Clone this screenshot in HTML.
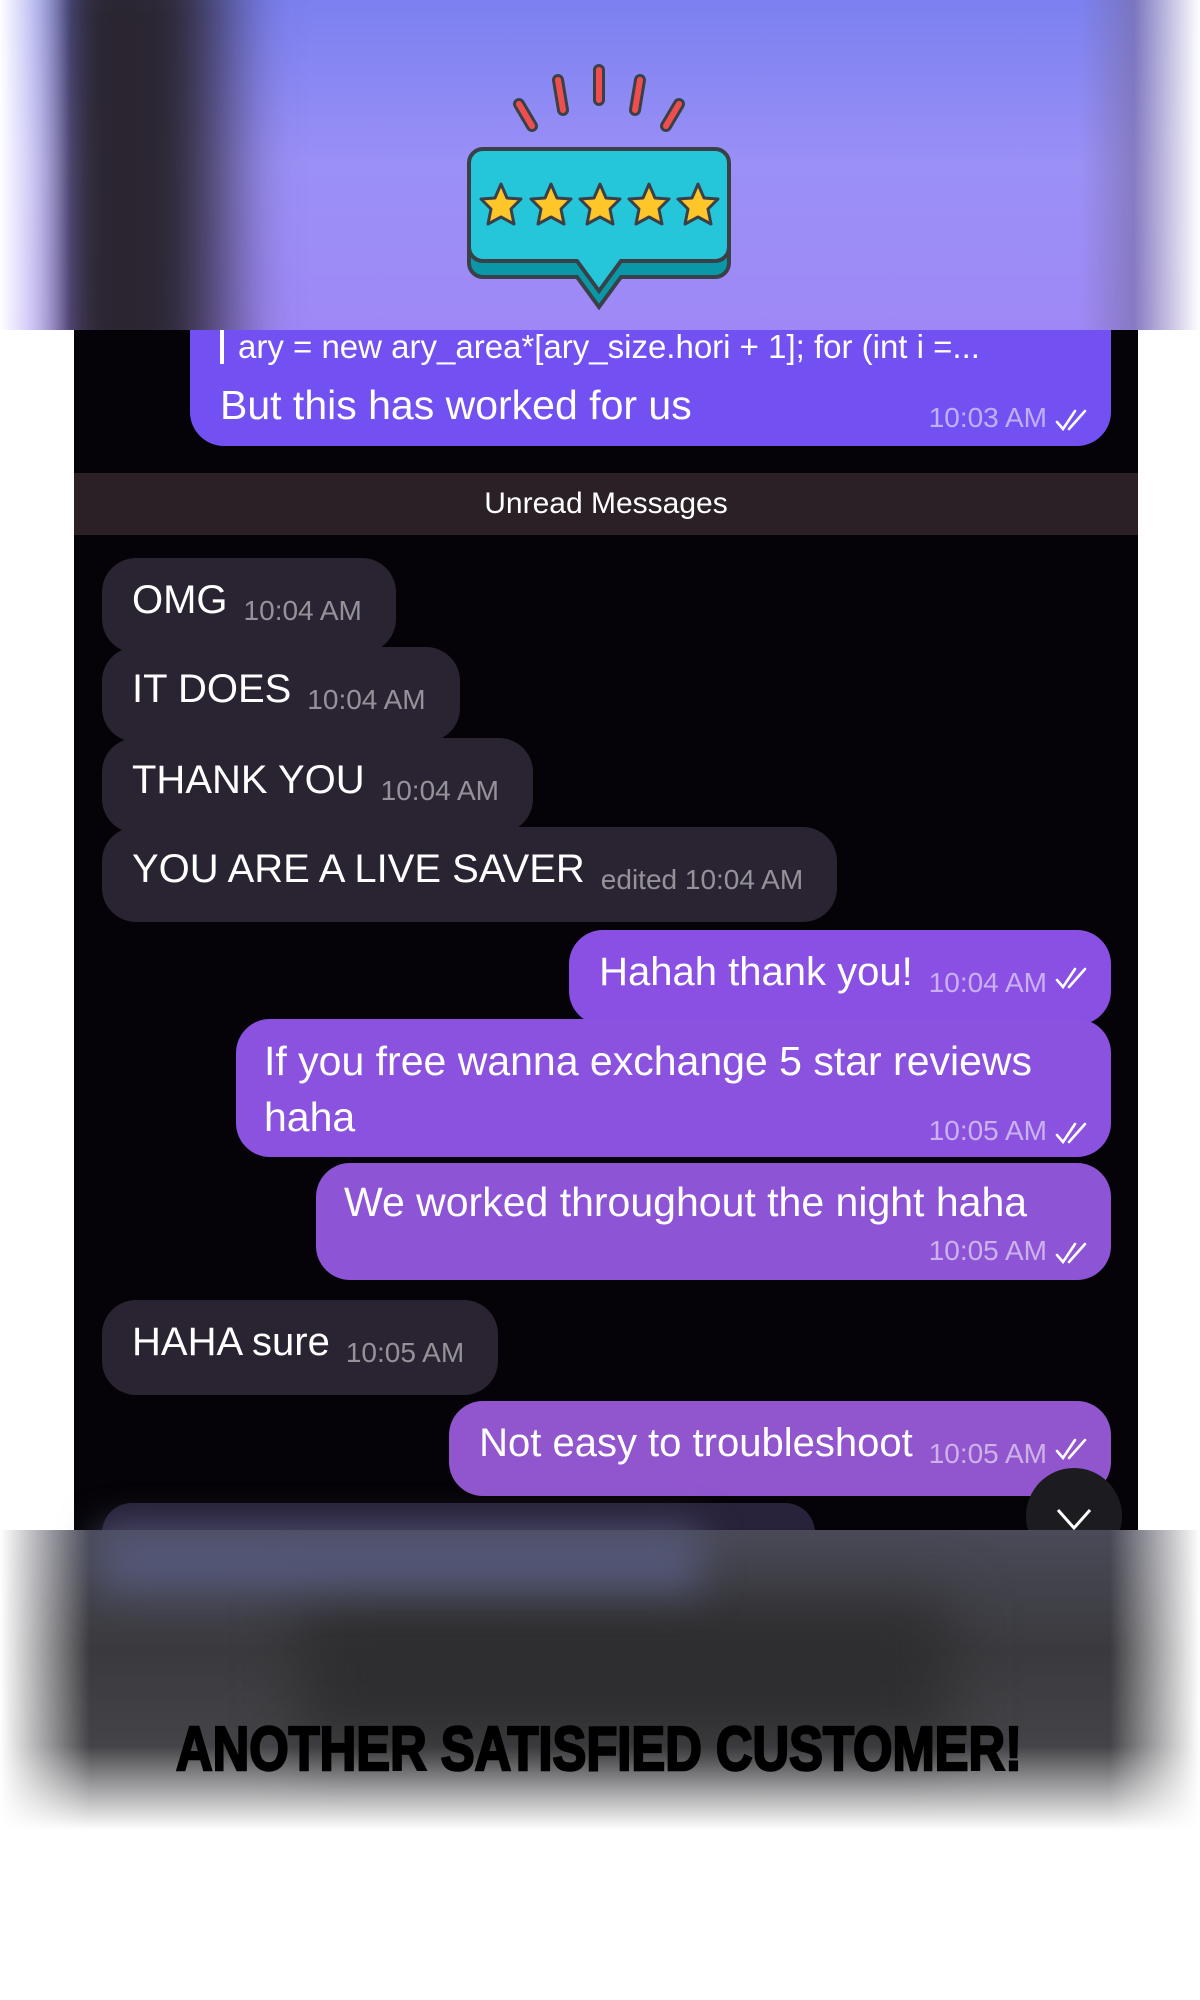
<!DOCTYPE html>
<html><head><meta charset="utf-8"><style>
*{margin:0;padding:0;box-sizing:border-box}
body{width:1200px;height:2000px;background:#fff;position:relative;overflow:hidden;font-family:"Liberation Sans",sans-serif}
.abs{position:absolute}
#chat{left:74px;top:300px;width:1064px;height:1260px;background:#050307}
.b{position:absolute;border-radius:34px;color:#fff;font-size:40px;line-height:84px;padding:0 30px;white-space:nowrap}
.in{background:#2a2331;left:102px;padding-right:34px}
.out{right:89px;padding-right:22px}
.t{font-size:28px;color:rgba(255,255,255,.5);margin-left:16px;vertical-align:-7px}
.out .t{color:rgba(255,255,255,.55)}
.ck{display:inline-block;width:36px;height:24px;margin-left:6px;vertical-align:-5px}
</style></head><body>
<svg width="0" height="0" style="position:absolute"><defs><g id="ck" fill="none" stroke="#fff" stroke-width="2.6" stroke-linecap="round"><path d="M2 14 L8 21 L20 3"/><path d="M14 21 L30 3"/></g></defs></svg>
<div id="chat" class="abs"></div>
<div class="abs" style="left:190px;top:300px;width:921px;height:146px;background:#7350f2;border-radius:0 0 34px 34px;color:#fff">
 <div class="abs" style="left:30px;top:28px;font-size:33px;"><span style="display:inline-block;width:4px;height:34px;background:#fff;vertical-align:-6px;margin-right:14px"></span>ary = new ary_area*[ary_size.hori + 1]; for (int i =...</div>
 <div class="abs" style="left:30px;top:82px;font-size:41px">But this has worked for us</div>
 <div class="abs" style="right:22px;top:102px;font-size:28px;color:rgba(255,255,255,.55)">10:03 AM<svg class="ck" viewBox="0 0 32 24"><use href="#ck"/></svg></div>
</div>
<div class="abs" style="left:74px;top:473px;width:1064px;height:62px;background:#2a2026;color:#fff;font-size:30px;line-height:62px;text-align:center">Unread Messages</div>

<div class="b in" style="top:558px">OMG<span class="t">10:04 AM</span></div>
<div class="b in" style="top:647px">IT DOES<span class="t">10:04 AM</span></div>
<div class="b in" style="top:738px">THANK YOU<span class="t">10:04 AM</span></div>
<div class="b in" style="top:827px">YOU ARE A LIVE SAVER<span class="t">edited 10:04 AM</span></div>
<div class="b out" style="top:930px;background:#8a50e4">Hahah thank you!<span class="t">10:04 AM</span><svg class="ck" viewBox="0 0 32 24"><use href="#ck"/></svg></div>
<div class="abs" style="left:236px;top:1019px;width:875px;height:138px;background:#8b52df;border-radius:34px;color:#fff;font-size:41px">
 <div class="abs" style="left:28px;top:14px;line-height:56px">If you free wanna exchange 5 star reviews<br>haha</div>
 <div class="abs" style="right:22px;top:96px;font-size:28px;color:rgba(255,255,255,.55)">10:05 AM<svg class="ck" viewBox="0 0 32 24"><use href="#ck"/></svg></div>
</div>
<div class="abs" style="left:316px;top:1163px;width:795px;height:117px;background:#8d54d6;border-radius:34px;color:#fff;font-size:41px">
 <div class="abs" style="left:28px;top:16px">We worked throughout the night haha</div>
 <div class="abs" style="right:22px;top:72px;font-size:28px;color:rgba(255,255,255,.55)">10:05 AM<svg class="ck" viewBox="0 0 32 24"><use href="#ck"/></svg></div>
</div>
<div class="b in" style="top:1300px">HAHA sure<span class="t">10:05 AM</span></div>
<div class="b out" style="top:1401px;background:#9156ce">Not easy to troubleshoot<span class="t">10:05 AM</span><svg class="ck" viewBox="0 0 32 24"><use href="#ck"/></svg></div>
<div class="abs" style="left:102px;top:1503px;width:713px;height:80px;background:#28223a;border-radius:30px"></div>
<div class="abs" style="left:1026px;top:1468px;width:96px;height:96px;border-radius:50%;background:#1c1c20"><svg width="96" height="96"><path d="M32 42 L48 60 L64 42" fill="none" stroke="#fff" stroke-width="3"/></svg></div>

<div class="abs" style="left:0;top:0;width:1200px;height:330px;overflow:hidden">
<div class="abs" style="left:0;top:0;width:1200px;height:330px;background:linear-gradient(180deg,#7b80f0 0%,#9a90f6 50%,#9f88f6 100%)"></div>
<div class="abs" style="left:60px;top:-40px;width:210px;height:420px;background:linear-gradient(90deg,#2a2530 0%,#2a2530 55%,rgba(42,37,48,0) 100%);filter:blur(22px)"></div>
<div class="abs" style="left:0;top:0;width:70px;height:330px;background:linear-gradient(90deg,#fff,rgba(255,255,255,0))"></div>
<div class="abs" style="right:0;top:0;width:120px;height:330px;background:linear-gradient(270deg,#fff 0%,rgba(120,110,160,.6) 55%,rgba(255,255,255,0))"></div>
</div>
<svg class="abs" style="left:460px;top:60px" width="280" height="250" viewBox="460 60 280 250">
 <g stroke="#3a4048" stroke-width="12" stroke-linecap="round"><line x1="599" y1="70" x2="599" y2="100"/><line x1="558" y1="80" x2="563" y2="110"/><line x1="640" y1="80" x2="635" y2="110"/><line x1="519" y1="104" x2="532" y2="126"/><line x1="679" y1="104" x2="666" y2="126"/></g>
 <g stroke="#ee4e4e" stroke-width="6" stroke-linecap="round"><line x1="599" y1="70" x2="599" y2="100"/><line x1="558" y1="80" x2="563" y2="110"/><line x1="640" y1="80" x2="635" y2="110"/><line x1="519" y1="104" x2="532" y2="126"/><line x1="679" y1="104" x2="666" y2="126"/></g>
 <path d="M483 165 h232 a14 14 0 0 1 14 14 v84 a14 14 0 0 1 -14 14 h-94 l-22 30 l-22 -30 h-94 a14 14 0 0 1 -14 -14 v-84 a14 14 0 0 1 14 -14z" fill="#0a98a8" stroke="#3a4048" stroke-width="4"/>
 <path d="M483 149 h232 a14 14 0 0 1 14 14 v84 a14 14 0 0 1 -14 14 h-94 l-22 30 l-22 -30 h-94 a14 14 0 0 1 -14 -14 v-84 a14 14 0 0 1 14 -14z" fill="#26c6da" stroke="#3a4048" stroke-width="4"/>
 <g fill="#ffc629" stroke="#3a4048" stroke-width="3" stroke-linejoin="round">
  <path id="s" d="M0 -22 L6 -8 L20 -7 L10 3 L13 18 L0 11 L-13 18 L-10 3 L-20 -7 L-6 -8Z" transform="translate(501 206)"/>
  <use href="#s" x="50"/><use href="#s" x="99"/><use href="#s" x="148"/><use href="#s" x="197"/>
 </g>
</svg>

<div class="abs" style="left:0;top:1530px;width:1200px;height:300px;background:linear-gradient(180deg,#4a4a58 0%,#3a3a3e 40%,#444448 72%,#fff 100%)"></div>
<div class="abs" style="left:300px;top:1600px;width:650px;height:140px;background:#2e2e30;filter:blur(30px)"></div>
<div class="abs" style="left:100px;top:1530px;width:600px;height:60px;background:#545878;filter:blur(20px)"></div>
<div class="abs" style="left:0;top:1530px;width:90px;height:300px;background:linear-gradient(90deg,#fff,rgba(255,255,255,0))"></div>
<div class="abs" style="right:0;top:1530px;width:90px;height:300px;background:linear-gradient(270deg,#fff,rgba(255,255,255,0))"></div>
<svg class="abs" style="left:0;top:1700px" width="1200" height="100"><text x="176" y="70" textLength="846" lengthAdjust="spacingAndGlyphs" font-family="Liberation Sans" font-weight="bold" font-size="62" fill="#000" stroke="#000" stroke-width="2.5">ANOTHER SATISFIED CUSTOMER!</text></svg>
</body></html>
